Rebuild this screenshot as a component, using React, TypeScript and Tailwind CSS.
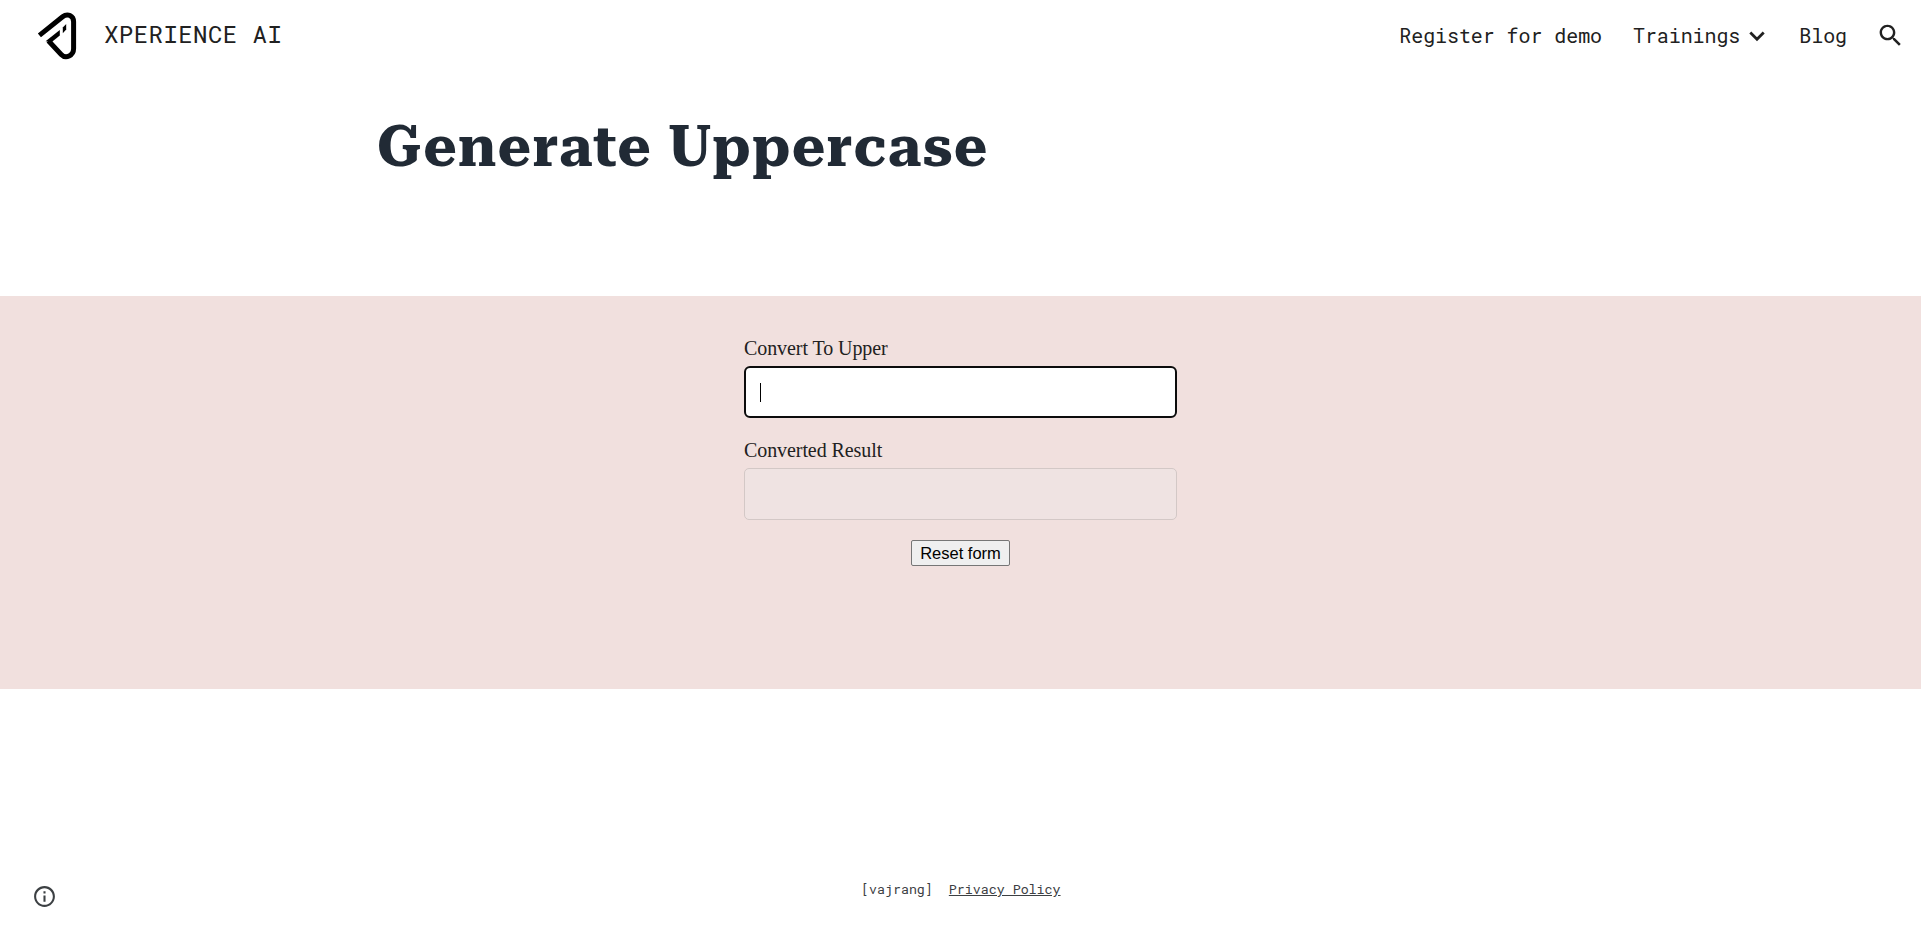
import React from "react";

function Logo() {
  return (
    <svg className="mt-px ml-[36px] h-[52px] w-[44px] shrink-0" viewBox="0 0 44 52" fill="none">
      <path d="M3.4 25.4 26.6 6.8C31.6 2.8 37.6 5.8 37.6 11.7V38.6C37.6 45.8 29.8 49.2 25.2 44.4L12.4 30.8" stroke="#000" strokeWidth="5" />
      <path d="M9.6 31.2 23.8 20v5.4l-8 6.6z" fill="#000" />
      <path d="M26.8 17.6 30.2 14v5.4l-3.4 3.8z" fill="#000" />
    </svg>
  );
}

export default function App() {
  return (
    <div className="flex h-[938px] w-full flex-col overflow-hidden bg-white text-[#212121]">
      <header className="flex h-[70px] shrink-0 items-center font-['Roboto_Mono','DejaVu_Sans_Mono',monospace]">
        <Logo />
        <span className="ml-[24px] pb-[2px] text-[24px] leading-[32px] tracking-[0.45px] whitespace-pre">XPERIENCE AI</span>
        <nav className="ml-auto flex items-center text-[20px] leading-[28px] tracking-[-0.08px] whitespace-pre">
          <a>Register for demo</a>
          <a className="ml-[31px] flex items-center">
            Trainings
            <svg className="ml-[5px] h-[24px] w-[24px]" viewBox="0 0 24 24" fill="none" stroke="#212121" strokeWidth="2.8">
              <path d="m5.3 9.6 6.7 6.7 6.7-6.7" />
            </svg>
          </a>
          <a className="ml-[30px]">Blog</a>
        </nav>
        <svg className="mr-[16px] ml-[29px] h-[29px] w-[29px]" viewBox="0 0 24 24" fill="#212121">
          <path d="M15.5 14h-.79l-.28-.27C15.41 12.59 16 11.11 16 9.5 16 5.91 13.09 3 9.5 3S3 5.91 3 9.5 5.91 16 9.5 16c1.61 0 3.09-.59 4.23-1.57l.27.28v.79l5 4.99L20.49 19l-4.99-5zm-6 0C7.01 14 5 11.99 5 9.5S7.01 5 9.5 5 14 7.01 14 9.5 11.99 14 9.5 14z" />
        </svg>
      </header>

      <section className="flex h-[226px] shrink-0 pt-[37px] pl-[377px]">
        <h1 className="h-[80px] font-['Roboto_Serif','DejaVu_Serif_Condensed','DejaVu_Serif',serif] text-[57px] leading-[80px] font-bold tracking-[1.35px] whitespace-pre text-[#212a35]">Generate Uppercase</h1>
      </section>

      <section className="flex h-[393px] shrink-0 justify-center bg-[#f1e0de] pt-[40px]">
        <form className="flex w-[433px] flex-col items-stretch font-['Liberation_Serif',serif] text-[20px] leading-[24px] tracking-[-0.08px]">
          <label>Convert To Upper</label>
          <div className="mt-[6px] flex h-[52px] items-center rounded-[6px] border-2 border-[#0c0c0c] bg-white pl-[14px]">
            <span className="h-[19px] w-px bg-black" />
          </div>
          <label className="mt-[20px]">Converted Result</label>
          <div className="mt-[6px] h-[52px] rounded-[5px] border border-[#d3c8c6] bg-[#efe3e2]" />
          <button type="button" className="mt-[20px] h-[26px] w-[99px] self-center rounded-[2px] border border-[#767676] bg-[#efefef] font-['Liberation_Sans',sans-serif] text-[16.5px] leading-[22px] tracking-normal text-black">Reset form</button>
        </form>
      </section>

      <footer className="flex grow items-start pt-[190px] text-[#3c4043]">
        <div className="flex w-[861px] shrink-0 pt-[5px] pl-[32px]">
          <svg className="h-[25px] w-[25px]" viewBox="0 0 24 24" fill="#3c4043">
            <path d="M11 17h2v-6h-2v6zm1-15C6.48 2 2 6.48 2 12s4.48 10 10 10 10-4.48 10-10S17.52 2 12 2zm0 18c-4.41 0-8-3.59-8-8s3.59-8 8-8 8 3.59 8 8-3.59 8-8 8zM11 9h2V7h-2v2z" />
          </svg>
        </div>
        <p className="flex gap-[16px] font-['Roboto_Mono','DejaVu_Sans_Mono',monospace] text-[13.3px] leading-[20px] whitespace-pre">
          <span>[vajrang]</span>
          <a className="underline">Privacy Policy</a>
        </p>
      </footer>
    </div>
  );
}
